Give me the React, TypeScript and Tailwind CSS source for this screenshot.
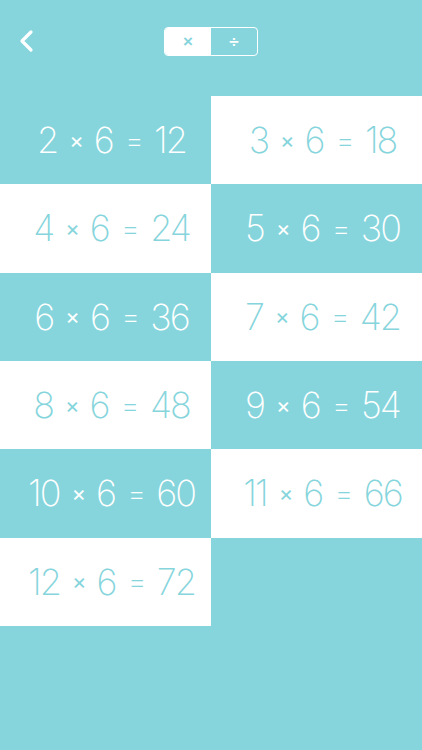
import React from 'react';

const ROWS = [2, 3, 4, 5, 6, 7, 8, 9, 10, 11, 12];

const Cell = ({ n, white }: { n: number; white: boolean }) => (
  <div
    className={`h-[88.33px] pl-[12px] flex items-center justify-center text-[36px] font-extralight tracking-[-2px] ${
      white ? 'bg-white text-[#86d5dc]' : 'bg-[#86d5dc] text-white'
    }`}
    style={{ fontFamily: 'Inter, "Noto Sans", sans-serif' }}
  >
    <span>{n}</span>
    <span className="text-[22px] font-normal mx-[12px]">×</span>
    <span>6</span>
    <span className="text-[30px] mx-[12px]">=</span>
    <span>{n * 6}</span>
  </div>
);

export default function App() {
  return (
    <div className="w-[422px] h-[750px] bg-[#86d5dc] overflow-hidden">
      <div className="relative h-[96px]">
        <svg className="absolute left-[18px] top-[29px]" width="18" height="24" viewBox="0 0 18 24">
          <path d="M13 3 L4 12 L13 21" fill="none" stroke="white" strokeWidth="3.2" strokeLinecap="round" strokeLinejoin="round" />
        </svg>
        <div className="absolute left-[164px] top-[27px] w-[94px] h-[29px] flex rounded-[4px] border border-white overflow-hidden" style={{ fontFamily: '"Liberation Sans", sans-serif' }}>
          <div className="flex-1 bg-white flex items-center justify-center text-[#86d5dc] text-[17px] font-bold">×</div>
          <div className="flex-1 flex items-center justify-center text-white text-[17px] font-bold">÷</div>
        </div>
      </div>
      <div className="grid grid-cols-[211px_211px]">
        {ROWS.map((n, i) => {
          const row = Math.floor(i / 2);
          const col = i % 2;
          const white = (row + col) % 2 === 1;
          return <Cell key={n} n={n} white={white} />;
        })}
      </div>
    </div>
  );
}
